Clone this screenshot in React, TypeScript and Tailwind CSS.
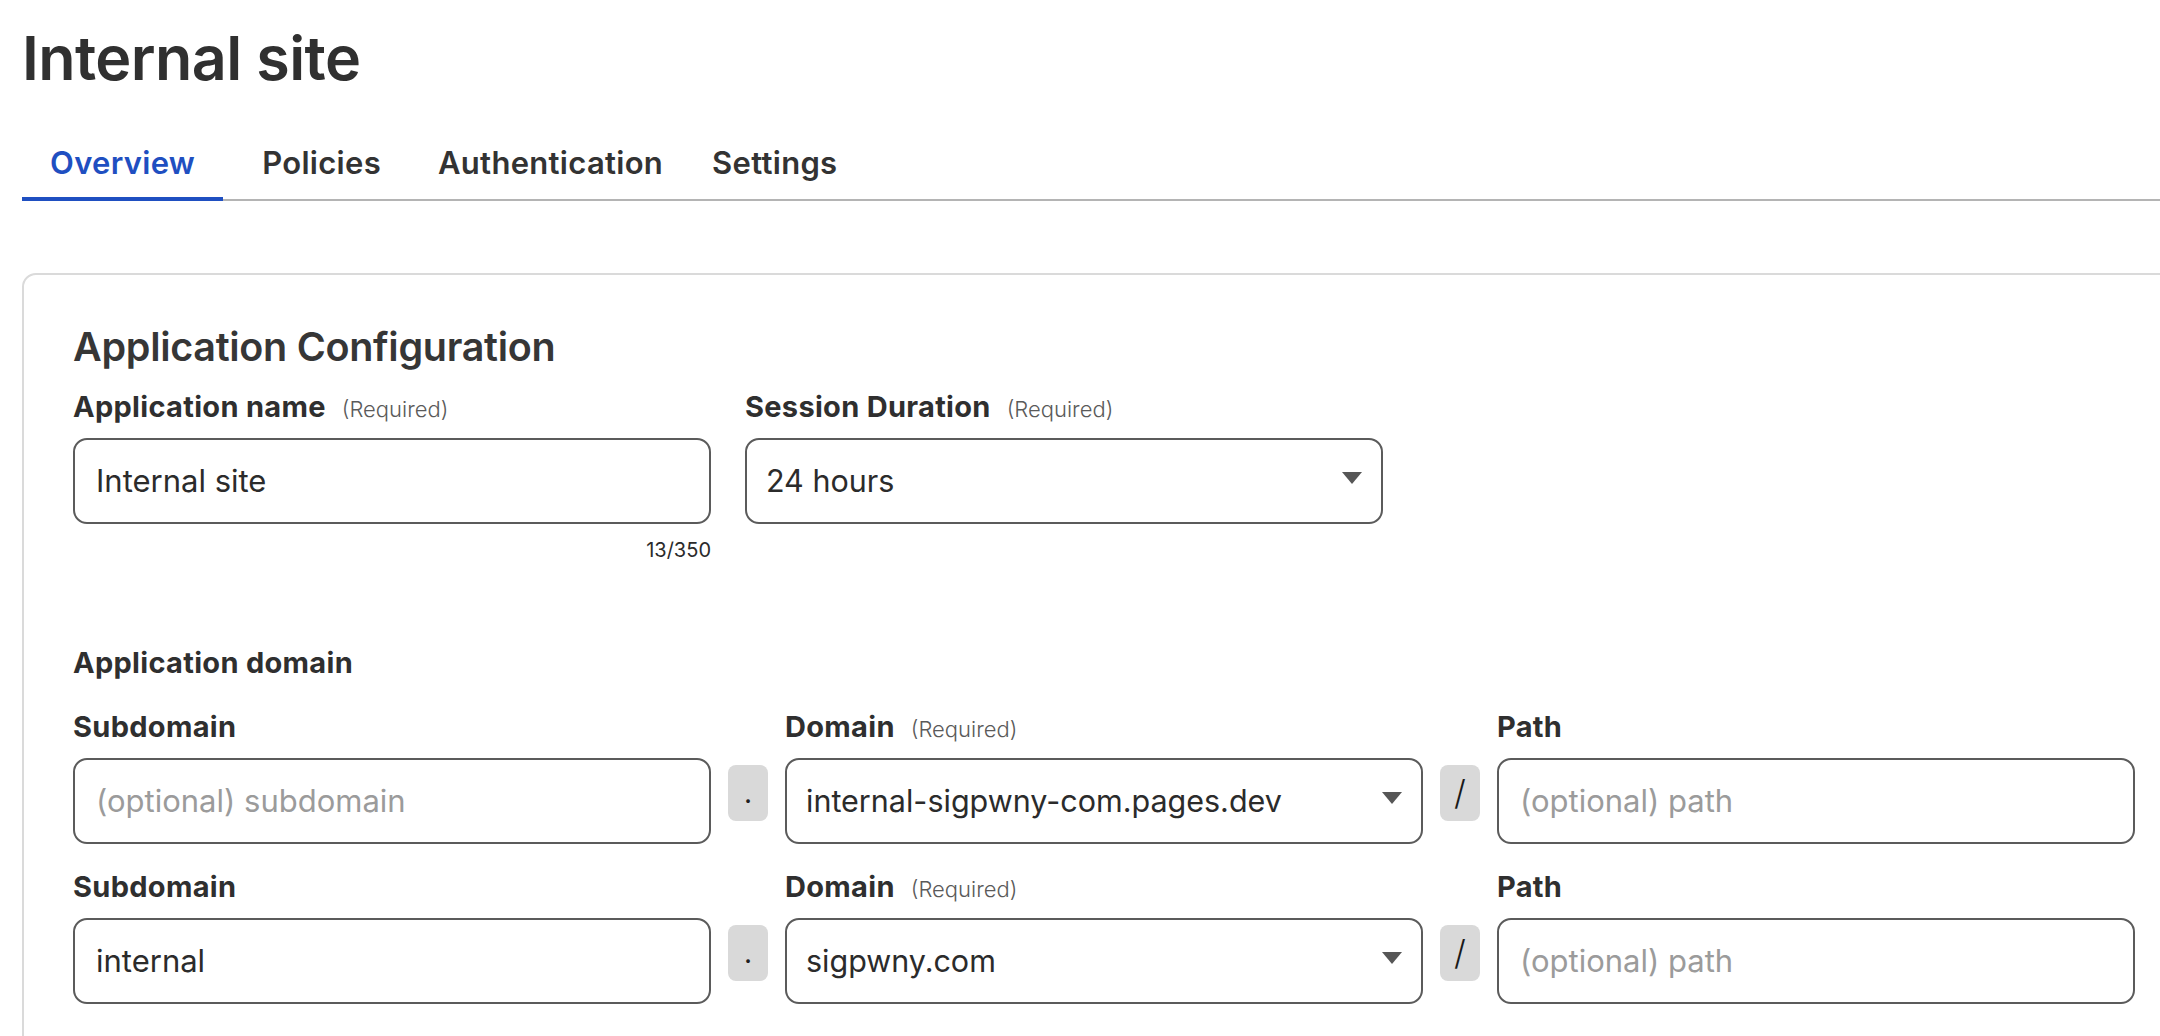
import React from "react";

const font = { fontFamily: "Inter, 'Noto Sans', sans-serif" };

function Label({ text, required }: { text: string; required?: boolean }) {
  return (
    <div className="flex items-baseline h-[32px] leading-[32px] whitespace-nowrap">
      <span className="text-[29px] font-bold text-[#2f2f2f] tracking-[0.3px]">{text}</span>
      {required && (
        <span className="ml-[16px] text-[22px] font-light text-[#5a5a5a]">(Required)</span>
      )}
    </div>
  );
}

function TextBox({ value, placeholder }: { value?: string; placeholder?: string }) {
  return (
    <div className="h-[86px] w-full rounded-[14px] border-2 border-[#5b5b5b] bg-white pl-[21px] pr-[20px] flex items-center">
      {value ? (
        <span className="text-[31px] text-[#2b2b2b] whitespace-nowrap">{value}</span>
      ) : (
        <span className="text-[31px] text-[#9b9b9b] whitespace-nowrap">{placeholder}</span>
      )}
    </div>
  );
}

function SelectBox({ value }: { value: string }) {
  return (
    <div className="h-[86px] w-full rounded-[14px] border-2 border-[#5b5b5b] bg-white pl-[19px] pr-[19px] flex items-center">
      <span className="text-[30.5px] text-[#2b2b2b] whitespace-nowrap">{value}</span>
      <svg className="ml-auto -mt-[7px]" width="20" height="12" viewBox="0 0 20 12">
        <path d="M0 0 L20 0 L10 12 Z" fill="#565656" />
      </svg>
    </div>
  );
}

function Sep({ ch }: { ch: string }) {
  return (
    <div className="mt-[7px] self-start h-[56px] w-[40px] rounded-[8px] bg-[#d9d9d9] flex items-center justify-center">
      {ch === "." ? (
        <span className="text-[28px] leading-[56px] text-[#1f1f1f]">.</span>
      ) : (
        <span className="text-[34px] leading-[56px] text-[#1a1a1a] font-light">/</span>
      )}
    </div>
  );
}

function DomainRow({ sub }: { sub?: string }) {
  return (
    <div className="grid grid-cols-[638px_40px_638px_40px_638px] gap-x-[17px] gap-y-[15px]">
      <Label text="Subdomain" />
      <div />
      <Label text="Domain" required />
      <div />
      <Label text="Path" />
      <TextBox value={sub} placeholder="(optional) subdomain" />
      <Sep ch="." />
      <SelectBox value={sub ? "sigpwny.com" : "internal-sigpwny-com.pages.dev"} />
      <Sep ch="/" />
      <TextBox placeholder="(optional) path" />
    </div>
  );
}

const tabs = [
  { t: "Overview", active: true, cls: "" },
  { t: "Policies", active: false, cls: "ml-[11px]" },
  { t: "Authentication", active: false, cls: "ml-[1px]" },
  { t: "Settings", active: false, cls: "-ml-[7px]" },
];

export default function App() {
  return (
    <div style={font} className="w-[2160px] h-[1036px] overflow-hidden bg-white text-[#333]">
      <div className="pl-[22px] w-[2186px]">
        <h1 className="pt-[27px] text-[61px] leading-[62px] font-semibold text-[#303030] tracking-[-0.6px]">
          Internal site
        </h1>

        <div className="mt-[56px] flex border-b-2 border-[#b4b4b4]">
          {tabs.map((tab) => (
            <div
              key={tab.t}
              className={
                tab.active
                  ? "-mb-[2px] px-[28px] pb-[16px] border-b-4 border-[#1f4fc1] text-[31px] leading-[36px] font-semibold text-[#1f4fc1] tracking-[0.3px]"
                  : tab.cls + " -mb-[2px] px-[28px] pb-[16px] border-b-4 border-transparent text-[31px] leading-[36px] font-semibold text-[#333333] tracking-[0.3px]"
              }
            >
              {tab.t}
            </div>
          ))}
        </div>

        <div className="mt-[72px] rounded-[14px] border-2 border-[#dadada] pl-[49px] pt-[48px] pb-[80px]">
          <h2 className="text-[39.5px] leading-[48px] font-semibold text-[#363636] tracking-[-0.3px]">
            Application Configuration
          </h2>

          <div className="mt-[20px] flex gap-[34px]">
            <div className="w-[638px] flex flex-col">
              <Label text="Application name" required />
              <div className="mt-[15px]">
                <TextBox value="Internal site" />
              </div>
              <div className="mt-[14px] text-right text-[20px] leading-[24px] text-[#2b2b2b]">13/350</div>
            </div>
            <div className="w-[638px] flex flex-col">
              <Label text="Session Duration" required />
              <div className="mt-[15px]">
                <SelectBox value="24 hours" />
              </div>
            </div>
          </div>

          <div className="mt-[85px] h-[32px] text-[29px] leading-[32px] font-bold text-[#2f2f2f] tracking-[0.3px]">
            Application domain
          </div>

          <div className="mt-[32px]">
            <DomainRow />
          </div>
          <div className="mt-[27px]">
            <DomainRow sub="internal" />
          </div>
        </div>
      </div>
    </div>
  );
}
